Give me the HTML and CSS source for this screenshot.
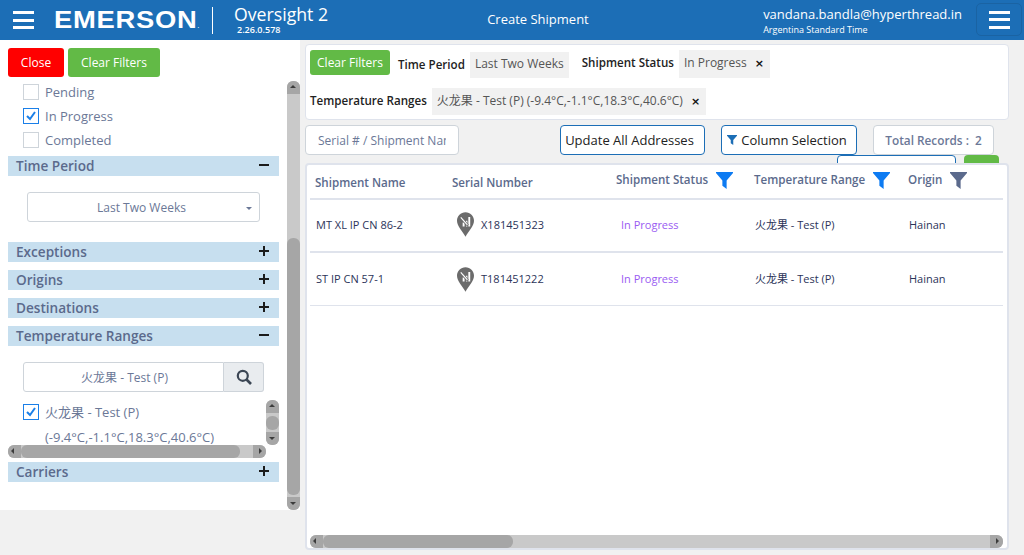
FILE: index.html
```html
<!DOCTYPE html>
<html lang="en">
<head>
  <meta charset="UTF-8" />
  <meta name="viewport" content="width=device-width, initial-scale=1.0" />
  <title>Create Shipment</title>
  <link rel="stylesheet" href="styles.css">
</head>
<body>
  <svg class="defs" width="0" height="0">
    <symbol id="funnel" viewBox="0 0 16 16"><path d="M0 0H16V1L10 8V16L6 13V8L0 1Z"/></symbol>
    <symbol id="pin" viewBox="0 0 18 26">
      <path d="M9 0C4 0 0 4 0 9C0 15 6 20 9 26C12 20 18 15 18 9C18 4 14 0 9 0Z" fill="#6b6b6b"/>
      <path d="M6 15V11H8V15ZM9.5 15V9H11V15ZM12 15V5H14V15Z" fill="#fff"/>
      <path d="M4 5.5L11.5 14" stroke="#6b6b6b" stroke-width="2.6"/>
      <path d="M4 5.5L11 13.5" stroke="#fff" stroke-width="1.2"/>
    </symbol>
  </svg>

  <header class="topbar">
    <div class="burger burger-left"><span></span><span></span><span></span></div>
    <div class="logo">EMERSON<small>.</small></div>
    <div class="app-name">
      <div class="app-title">Oversight 2</div>
      <div class="app-version">2.26.0.578</div>
    </div>
    <div class="page-title">Create Shipment</div>
    <div class="user">
      <div class="user-mail">vandana.bandla@hyperthread.in</div>
      <div class="user-zone">Argentina Standard Time</div>
    </div>
    <div class="menu-btn"><div class="burger"><span></span><span></span><span></span></div></div>
  </header>

  <div class="content">
    <aside class="sidebar">
      <div class="filters">
        <div class="filter-actions">
          <button class="btn btn-red">Close</button>
          <button class="btn btn-green">Clear Filters</button>
        </div>
        <div class="status-list">
          <label class="check-row"><span class="check"></span>Pending</label>
          <label class="check-row"><span class="check on">
            <svg viewBox="0 0 16 16" width="16" height="16"><path d="M4 8L7 11L12 4" fill="none" stroke="#1a7fe8" stroke-width="2"/></svg>
          </span>In Progress</label>
          <label class="check-row"><span class="check"></span>Completed</label>
        </div>

        <div class="section-bar"><span>Time Period</span><b class="sign minus"></b></div>
        <div class="period-select">Last Two Weeks<i class="caret"></i></div>

        <div class="section-bar"><span>Exceptions</span><b class="sign plus"></b></div>
        <div class="section-bar"><span>Origins</span><b class="sign plus"></b></div>
        <div class="section-bar"><span>Destinations</span><b class="sign plus"></b></div>
        <div class="section-bar"><span>Temperature Ranges</span><b class="sign minus"></b></div>

        <div class="range-search">
          <div class="range-input">火龙果 - Test (P)</div>
          <div class="range-btn">
            <svg viewBox="0 0 16 16" width="16" height="16"><circle cx="6.8" cy="6.8" r="5" fill="none" stroke="#3b4654" stroke-width="2.2"/><path d="M10.5 10.5L15 15" stroke="#3b4654" stroke-width="2.6"/></svg>
          </div>
        </div>

        <div class="range-box">
          <div class="range-main">
            <div class="range-list">
              <label class="check-row"><span class="check on">
                <svg viewBox="0 0 16 16" width="16" height="16"><path d="M4 8L7 11L12 4" fill="none" stroke="#1a7fe8" stroke-width="2"/></svg>
              </span>火龙果 - Test (P)</label>
              <div class="range-values">(-9.4°C,-1.1°C,18.3°C,40.6°C)</div>
            </div>
            <div class="sb-v sb-small">
              <i class="arrow up"></i><div class="thumb-v small"></div><i class="arrow down"></i>
            </div>
          </div>
          <div class="sb-h sb-side">
            <i class="arrow left"></i><div class="thumb-h side"></div><i class="arrow right"></i>
          </div>
        </div>

        <div class="section-bar"><span>Carriers</span><b class="sign plus"></b></div>
      </div>

      <div class="sb-v sb-page">
        <i class="arrow up"></i><div class="thumb-v page"></div><i class="arrow down"></i>
      </div>
    </aside>

    <main class="main">
      <section class="applied card">
        <div class="applied-row">
          <button class="btn btn-green btn-small">Clear Filters</button>
          <span class="applied-label time-label">Time Period</span>
          <span class="chip time-chip">Last Two Weeks</span>
          <span class="applied-label status-label">Shipment Status</span>
          <span class="chip status-chip">In Progress<b>×</b></span>
        </div>
        <div class="applied-row second">
          <span class="applied-label range-label">Temperature Ranges</span>
          <span class="chip range-chip">火龙果 - Test (P) (-9.4°C,-1.1°C,18.3°C,40.6°C)<b>×</b></span>
        </div>
      </section>

      <div class="toolbar">
        <input class="search-box" type="text" placeholder="Serial # / Shipment Name" />
        <button class="outline update-btn">Update All Addresses</button>
        <button class="outline column-btn"><svg width="10" height="10"><use href="#funnel" fill="#1c6eb6"/></svg>Column Selection</button>
        <div class="total">Total Records :&nbsp; 2</div>
      </div>

      <div class="behind">
        <div class="behind-input"></div>
        <div class="behind-green"></div>
      </div>

      <section class="grid-card card">
        <div class="grid-area">
          <div class="grid-row grid-head">
            <div class="th">Shipment Name</div>
            <div class="th">Serial Number</div>
            <div class="th raised">Shipment Status<svg width="17" height="17"><use href="#funnel" fill="#0d7bf2"/></svg></div>
            <div class="th raised">Temperature Range<svg width="17" height="17"><use href="#funnel" fill="#0d7bf2"/></svg></div>
            <div class="th raised">Origin<svg width="17" height="17"><use href="#funnel" fill="#5b6a8c"/></svg></div>
          </div>
          <div class="grid-row grid-line">
            <div class="td">MT XL IP CN 86-2</div>
            <div class="td serial"><svg width="17" height="25"><use href="#pin"/></svg>X181451323</div>
            <div class="td progress">In Progress</div>
            <div class="td">火龙果 - Test (P)</div>
            <div class="td">Hainan</div>
          </div>
          <div class="grid-row grid-line">
            <div class="td">ST IP CN 57-1</div>
            <div class="td serial"><svg width="17" height="25"><use href="#pin"/></svg>T181451222</div>
            <div class="td progress">In Progress</div>
            <div class="td">火龙果 - Test (P)</div>
            <div class="td">Hainan</div>
          </div>
        </div>
        <div class="sb-h sb-grid">
          <i class="arrow left"></i><div class="thumb-h grid"></div><i class="arrow right"></i>
        </div>
      </section>
    </main>
  </div>
</body>
</html>
```

FILE: styles.css
```css
* {
  box-sizing: border-box;
}
html, body {
  margin: 0;
  height: 555px;
  overflow: hidden;
}
body {
  font-family: "Open Sans", "Noto Sans CJK SC", sans-serif;
  font-size: 12px;
  color: #2c3459;
  background: #f1f1f1;
}
.defs {
  position: absolute;
}
button {
  font-family: inherit;
  cursor: pointer;
}

/* top bar */
.topbar {
  height: 40px;
  background: #1c6eb6;
  color: #fff;
  display: flex;
  align-items: center;
}
.burger {
  width: 21px;
  height: 18px;
  display: flex;
  flex-direction: column;
  justify-content: space-between;
}
.burger span {
  height: 3px;
  background: #fff;
}
.burger-left {
  margin-left: 13px;
}
.logo {
  margin-left: 20px;
  width: 158px;
  font-family: "Liberation Sans", sans-serif;
  font-weight: bold;
  font-size: 23px;
  letter-spacing: 0.6px;
  transform: scaleX(1.19);
  transform-origin: left;
}
.logo small {
  font-size: 5px;
}
.app-name {
  border-left: 1px solid #fff;
  height: 27px;
  padding-left: 21px;
}
.app-title {
  font-size: 17.7px;
  line-height: 17px;
  margin-top: -1px;
}
.app-version {
  font-size: 9px;
  line-height: 11px;
  margin-left: 3px;
  font-weight: 600;
  margin-top: 1px;
}
.page-title {
  margin-left: 159px;
  margin-top: -2px;
  width: 276px;
  font-size: 13px;
}
.user {
  width: 213px;
  margin-top: 2px;
}
.user-mail {
  font-size: 13px;
  line-height: 16px;
  white-space: nowrap;
}
.user-zone {
  font-size: 9px;
  line-height: 15px;
}
.menu-btn {
  width: 46px;
  height: 33px;
  border: 1px solid #1a63a3;
  border-radius: 5px;
  display: flex;
  align-items: center;
  justify-content: center;
  margin-top: -1px;
}

/* layout */
.content {
  display: flex;
  align-items: flex-start;
}
.sidebar {
  width: 300px;
  height: 470px;
  background: #fff;
  display: flex;
}
.filters {
  width: 287px;
  padding: 8px 8px 0;
  flex: none;
  color: #5b6a8c;
}
.filter-actions {
  display: flex;
  gap: 4px;
}
.btn {
  border: none;
  border-radius: 3px;
  color: #fff;
  font-size: 12px;
  height: 29px;
  padding: 0;
}
.btn-red {
  background: #ff0000;
  width: 56px;
}
.btn-green {
  background: #62ba46;
  width: 92px;
}
.status-list {
  margin-top: 3px;
  margin-bottom: 4px;
}
.check-row {
  display: flex;
  align-items: center;
  height: 24px;
  margin-left: 15px;
  font-size: 13px;
  line-height: 18px;
  color: #6b7897;
}
.check {
  width: 16px;
  height: 16px;
  border: 1px solid #ced4da;
  margin-right: 6px;
  flex: none;
  display: block;
}
.check.on {
  border-color: #1a7fe8;
}
.check.on svg {
  display: block;
  margin: -1px;
}
.section-bar {
  width: 271px;
  height: 20px;
  background: #c7dfef;
  margin-bottom: 8px;
  padding: 0 8px 2px;
  display: flex;
  align-items: center;
  justify-content: space-between;
  font-size: 13.6px;
  font-weight: 600;
  color: #5b6a8c;
}
.sign {
  width: 10px;
  height: 10px;
  position: relative;
  margin-right: 2px;
}
.sign::before, .plus::after {
  content: "";
  position: absolute;
  background: #1b1b1b;
  left: 0;
  top: 4px;
  width: 10px;
  height: 2px;
}
.plus::after {
  left: 4px;
  top: 0;
  width: 2px;
  height: 10px;
}
.period-select {
  width: 233px;
  height: 30px;
  margin: 16px 0 20px 19px;
  border: 1px solid #ced4da;
  border-radius: 3px;
  display: flex;
  align-items: center;
  justify-content: center;
  color: #6b7897;
  position: relative;
  padding-right: 4px;
}
.caret {
  position: absolute;
  right: 7px;
  top: 14px;
  border: 3px solid transparent;
  border-top-color: #6b7897;
}
.range-search {
  display: flex;
  margin: 16px 0 8px 15px;
  width: 241px;
  height: 30px;
}
.range-input {
  flex: 1;
  border: 1px solid #ced4da;
  border-radius: 3px 0 0 3px;
  display: flex;
  align-items: center;
  justify-content: center;
  padding: 1px 0 0 2px;
  line-height: 16px;
  color: #6b7897;
}
.range-btn {
  width: 40px;
  background: #e9ecef;
  border: 1px solid #ced4da;
  border-left: none;
  border-radius: 0 3px 3px 0;
  display: flex;
  align-items: center;
  justify-content: center;
}
.range-box {
  width: 271px;
  margin-bottom: 4px;
}
.range-main {
  display: flex;
  height: 45px;
  overflow: hidden;
}
.range-list {
  width: 258px;
  flex: none;
  overflow: hidden;
}
.range-values {
  margin-left: 37px;
  font-size: 13px;
  line-height: 20px;
  margin-top: 3px;
  color: #6b7897;
  white-space: nowrap;
}

/* scrollbars */
.sb-v, .sb-h {
  background: #c9c9c9;
  display: flex;
  border-radius: 6px;
  overflow: hidden;
  flex: none;
}
.sb-v {
  width: 13px;
  flex-direction: column;
}
.sb-h {
  height: 13px;
}
.sb-page {
  height: 429px;
  margin-top: 41px;
}
.sb-small {
  height: 45px;
}
.sb-side {
  width: 258px;
}
.sb-grid {
  width: 693px;
}
.arrow {
  flex: none;
  background: #a6a6a6;
  position: relative;
  width: 13px;
  height: 13px;
}
.arrow::after {
  content: "";
  position: absolute;
  left: 3px;
  top: 3px;
  border: 3.5px solid transparent;
}
.arrow.up::after {
  top: 1px;
  border-bottom-color: #3c3c3c;
}
.arrow.down::after {
  top: 5px;
  border-top-color: #3c3c3c;
}
.arrow.left::after {
  left: 0;
  border-right-color: #3c3c3c;
}
.arrow.right::after {
  left: 6px;
  border-left-color: #3c3c3c;
}
.thumb-v, .thumb-h {
  background: #a6a6a6;
  border-radius: 6px;
}
.thumb-v.page {
  height: 257px;
  margin-top: 144px;
}
.thumb-v.small {
  height: 14px;
  margin-top: 3px;
}
.thumb-h.side {
  width: 219px;
}
.thumb-h.grid {
  width: 190px;
}
.sb-h .arrow:last-child {
  margin-left: auto;
}
.sb-v .arrow:last-child {
  margin-top: auto;
}

/* main column */
.main {
  width: 709px;
  padding: 4px 0 0 5px;
}
.card {
  background: #fff;
  border: 1px solid #dfe3ec;
  border-radius: 4px;
}
.applied {
  width: 704px;
  height: 76px;
  padding: 5px 4px 0;
}
.applied-row {
  display: flex;
  align-items: flex-start;
}
.applied-row.second {
  margin-top: 10px;
  align-items: center;
}
.applied-label {
  font-size: 11.6px;
  font-weight: 600;
  color: #222;
  white-space: nowrap;
  line-height: 17px;
}
.range-label {
  margin-bottom: 2px;
}
.time-label {
  margin: 6px 5px 0 8px;
}
.status-label {
  margin: 4px 5px 0 13px;
}
.btn-small {
  width: 80px;
  height: 25px;
}
.chip {
  background: #f1f1f1;
  color: #555;
  padding: 0 5px 2px;
  white-space: nowrap;
  display: flex;
  align-items: center;
  line-height: 16px;
}
.chip b {
  margin: 2px 1px 0 8px;
  color: #111;
  font-family: "DejaVu Sans", sans-serif;
  font-size: 11px;
}
.time-chip {
  height: 26px;
  margin-top: 2px;
}
.status-chip {
  height: 28px;
}
.range-chip {
  height: 27px;
  margin-left: 5px;
}
.toolbar {
  display: flex;
  height: 30px;
  margin-top: 5px;
}
.search-box {
  width: 154px;
  border: 1px solid #ced4da;
  border-radius: 4px;
  padding: 0 12px;
  background: #fff;
  font-family: inherit;
  font-size: 12px;
}
.search-box::placeholder {
  color: #6b7897;
  opacity: 1;
}
.outline {
  background: #fff;
  border: 1px solid #1c6eb6;
  border-radius: 4px;
  color: #222;
  font-size: 13px;
  padding: 0 4px 0 0;
}
.update-btn {
  width: 145px;
  margin-left: 101px;
  padding-right: 6px;
}
.column-btn {
  width: 136px;
  margin-left: 16px;
}
.column-btn svg {
  margin-right: 4px;
}
.total {
  width: 121px;
  margin-left: 16px;
  background: #fff;
  border: 1px solid #ced4da;
  border-radius: 4px;
  display: flex;
  align-items: center;
  justify-content: center;
  font-size: 11.8px;
  font-weight: 600;
  color: #6b7897;
}
.behind {
  display: flex;
  height: 8px;
  margin-left: 532px;
  overflow: hidden;
}
.behind-input {
  width: 119px;
  height: 30px;
  border: 1px solid #1c6eb6;
  border-radius: 4px;
  background: #fff;
}
.behind-green {
  width: 35px;
  height: 30px;
  margin-left: 8px;
  border-radius: 4px;
  background: #62ba46;
}

/* grid */
.grid-card {
  width: 704px;
  height: 387px;
  border-width: 2px;
  padding: 0 3px;
  display: flex;
  flex-direction: column;
  justify-content: space-between;
}
.grid-area {
  width: 693px;
}
.grid-row {
  display: grid;
  grid-template-columns: 137px 164px 138px 154px 1fr;
  padding-left: 5px;
}
.grid-head {
  height: 35px;
  border-bottom: 2px solid #dfe3ec;
  font-size: 11.6px;
}
.th {
  font-weight: 600;
  color: #5b6a8c;
  display: flex;
  align-items: center;
  padding-top: 1px;
  white-space: nowrap;
}
.th.raised {
  align-items: flex-start;
  padding-top: 7px;
}
.th svg {
  margin: 0 0 0 8px;
}
.grid-line {
  height: 53px;
  border-bottom: 2px solid #dfe3ec;
  align-items: center;
  font-size: 11px;
  line-height: 16px;
  padding-bottom: 2px;
}
.grid-line:last-child {
  border-bottom-width: 1px;
  padding-bottom: 0;
}
.td {
  padding-left: 1px;
  color: #2c3459;
  white-space: nowrap;
}
.td.serial {
  display: flex;
  align-items: center;
  padding-left: 5px;
}
.td.serial svg {
  margin-right: 7px;
}
.td.progress {
  padding-left: 5px;
  color: #9a5cf2;
}
```
